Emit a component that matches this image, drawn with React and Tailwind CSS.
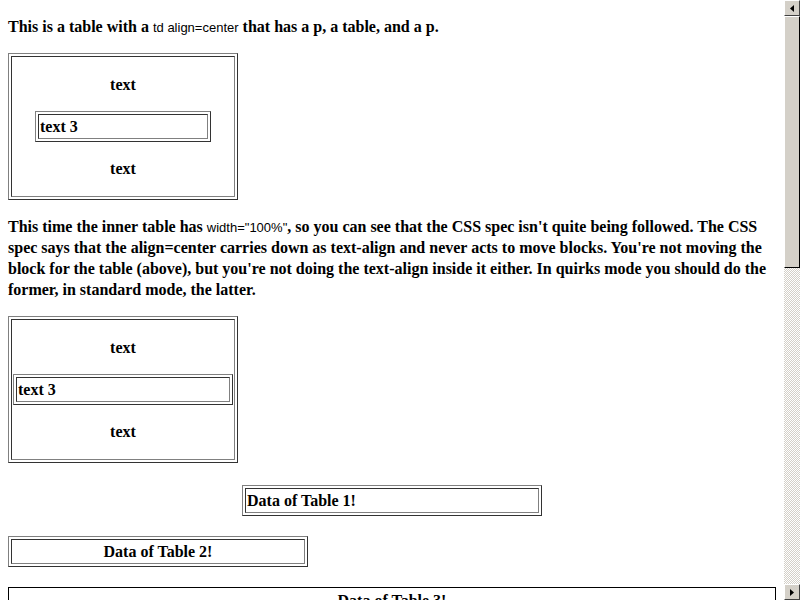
import React from "react";

const serif = "font-['Liberation_Serif','Times_New_Roman',serif]";
const sans = "font-['Liberation_Sans',Arial,sans-serif]";

function Outer({ className = "", children, cellClass = "" }) {
  return (
    <div className={`border border-t-[#808080] border-l-[#808080] border-r-[#333333] border-b-[#333333] p-[2px] ${className}`}>
      <div className={`border border-t-[#333333] border-l-[#333333] border-r-[#808080] border-b-[#808080] p-px ${cellClass}`}>
        {children}
      </div>
    </div>
  );
}

function BtnFace({ children }) {
  return (
    <div className="h-4 w-4 shrink-0 bg-[#d4d0c8] border border-t-white border-l-white border-r-[#404040] border-b-[#404040] flex items-center justify-center">
      {children}
    </div>
  );
}

export default function App() {
  return (
    <div className={`h-[600px] w-[800px] overflow-hidden flex bg-white text-black ${serif}`}>
      <div className="w-[784px] shrink-0 px-2 pt-4 text-[16px] leading-[21px] font-bold">
        <p className="h-[21px]">
          This is a table with a <code className={`${sans} font-normal text-[13px] leading-none`}>td align=center</code> that has a p, a table, and a p.
        </p>

        <Outer className="mt-4 w-[230px]" cellClass="text-center">
          <p className="my-4">text</p>
          <Outer className="w-[176px] mx-auto text-left">
            <div>text 3</div>
          </Outer>
          <p className="my-4">text</p>
        </Outer>

        <p className="mt-4 w-[776px] h-[84px]">
          This time the inner table has <code className={`${sans} font-normal text-[13px] leading-none`}>width="100%"</code>, so you can see that the CSS spec isn't quite being followed. The CSS spec says that the align=center carries down as text-align and never acts to move blocks. You're not moving the block for the table (above), but you're not doing the text-align inside it either. In quirks mode you should do the former, in standard mode, the latter.
        </p>

        <Outer className="mt-4 w-[230px]" cellClass="text-center">
          <p className="my-4">text</p>
          <Outer className="w-full text-left">
            <div>text 3</div>
          </Outer>
          <p className="my-4">text</p>
        </Outer>

        <Outer className="mt-[22px] w-[300px] mx-auto">
          <div>Data of Table 1!</div>
        </Outer>

        <Outer className="mt-[20px] w-[300px]" cellClass="text-center">
          <div>Data of Table 2!</div>
        </Outer>

        <div className="mt-[20px] w-[768px] border border-black p-[2px]">
          <div className="text-center">Data of Table 3!</div>
        </div>
      </div>

      <div className="w-4 h-[600px] shrink-0 flex flex-col">
        <BtnFace>
          <svg width="4" height="7" viewBox="0 0 4 7"><path d="M4 0 L0 3.5 L4 7 Z" fill="#000" /></svg>
        </BtnFace>
        <div className="h-[252px] shrink-0 bg-[#d4d0c8] border border-t-white border-l-white border-r-black border-b-black" />
        <div className="flex-1 bg-[repeating-conic-gradient(#d4d0c8_0_25%,#ffffff_0_50%)] bg-[length:2px_2px]" />
        <BtnFace>
          <svg width="4" height="7" viewBox="0 0 4 7"><path d="M0 0 L4 3.5 L0 7 Z" fill="#000" /></svg>
        </BtnFace>
      </div>
    </div>
  );
}
